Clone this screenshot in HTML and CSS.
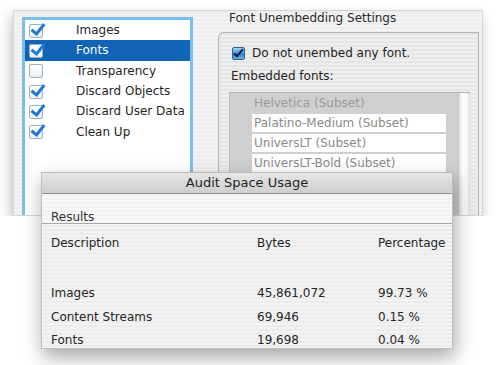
FILE: index.html
```html
<!DOCTYPE html>
<html lang="en">
<head>
  <meta charset="UTF-8" />
  <title>Audit Space Usage</title>
  <link rel="stylesheet" href="styles.css">
</head>
<body>
  <div class="window">
    <div class="options">
      <div class="option"><span class="check on"></span>Images</div>
      <div class="option selected"><span class="check on"></span>Fonts</div>
      <div class="option"><span class="check"></span>Transparency</div>
      <div class="option"><span class="check on"></span>Discard Objects</div>
      <div class="option"><span class="check on"></span>Discard User Data</div>
      <div class="option"><span class="check on"></span>Clean Up</div>
    </div>

    <div class="settings">
      <div class="settings-title">Font Unembedding Settings</div>
      <div class="group">
        <label class="aqua-row"><span class="aqua-check"></span>Do not unembed any font.</label>
        <div class="group-label">Embedded fonts:</div>
        <div class="font-list">
          <div class="font-items">
            <div class="font-item dim">Helvetica (Subset)</div>
            <div class="font-item">Palatino-Medium (Subset)</div>
            <div class="font-item">UniversLT (Subset)</div>
            <div class="font-item">UniversLT-Bold (Subset)</div>
          </div>
          <div class="scroll-track"></div>
        </div>
      </div>
    </div>
  </div>

  <div class="dialog">
    <div class="dialog-title">Audit Space Usage</div>
    <div class="results-band">Results</div>
    <div class="results">
      <div class="row head">
        <span>Description</span><span>Bytes</span><span>Percentage</span>
      </div>
      <div class="row first">
        <span>Images</span><span>45,861,072</span><span>99.73 %</span>
      </div>
      <div class="row">
        <span>Content Streams</span><span>69,946</span><span>0.15 %</span>
      </div>
      <div class="row">
        <span>Fonts</span><span>19,698</span><span>0.04 %</span>
      </div>
    </div>
  </div>
</body>
</html>
```

FILE: styles.css
```css
body {
  margin: 0;
  background: #fff;
  font-family: 'DejaVu Sans', sans-serif;
  font-size: 12px;
  color: #222;
  overflow: hidden;
}

.window {
  display: flex;
  margin: 10px 0 0 13px;
  width: 470px;
  height: 206px;
  padding-right: 3px;
  box-sizing: border-box;
  background: repeating-linear-gradient(#ededed 0 2px, #f4f4f4 2px 4px);
  border: 1px solid #d6d6d6;
  box-shadow: -2px 6px 12px rgba(0, 0, 0, 0.25);
}

/* left checklist */
.options {
  width: 171px;
  margin: 6px 0 0 8px;
  background: #fff;
  border: 3px solid #7cc0ea;
  border-bottom: none;
  box-sizing: border-box;
}

.option {
  display: flex;
  align-items: center;
  height: 20.3px;
  color: #262626;
}

.option.selected {
  background: #1264b6;
  color: #fff;
}

.check {
  position: relative;
  width: 14px;
  height: 14px;
  margin: 1px 33px 0 4px;
  background: linear-gradient(#fff, #e8eef4);
  border: 1px solid #9cb0c8;
  border-radius: 2px;
  box-sizing: border-box;
}

.check.on::after {
  content: "";
  position: absolute;
  left: 4px;
  top: -4px;
  width: 5px;
  height: 11px;
  border: solid #1f78cf;
  border-width: 0 3px 3px 0;
  transform: rotate(38deg);
  filter: drop-shadow(0 0 0.6px #d6ecff);
}

/* right settings panel */
.settings {
  flex: 1;
  display: flex;
  flex-direction: column;
  margin-left: 25px;
}

.settings-title {
  margin-left: 11px;
  line-height: 14px;
  color: #2a2a2a;
}

.group {
  flex: 1;
  display: flex;
  flex-direction: column;
  margin-top: 7px;
  padding: 12px 8px 0 10px;
  border: 1px solid #b4b4b4;
  border-bottom: none;
  border-radius: 6px 0 0 0;
  background: repeating-linear-gradient(#e6e6e6 0 2px, #eeeeee 2px 4px);
  overflow: hidden;
}

.aqua-row {
  display: flex;
  align-items: center;
  line-height: 16px;
  margin-left: 3px;
  color: #1e1e1e;
}

.aqua-check {
  position: relative;
  width: 13px;
  height: 13px;
  margin-right: 7px;
  background: linear-gradient(#9ed0f6, #2f86d6 60%, #6bb6f0);
  border: 1px solid #38608c;
  border-radius: 2px;
  box-sizing: border-box;
}

.aqua-check::after {
  content: "";
  position: absolute;
  left: 3px;
  top: -1px;
  width: 3px;
  height: 8px;
  border: solid #0c1e38;
  border-width: 0 2px 2px 0;
  transform: rotate(40deg);
}

.group-label {
  margin: 7px 0 8px 2px;
  line-height: 16px;
  color: #262626;
}

.font-list {
  flex: 1;
  display: flex;
  background: #d0d0d0;
  border-top: 1px solid #b2b2b2;
  border-left: 1px solid #c0c0c0;
}

.font-items {
  flex: 1;
  padding: 1px 12px 0 22px;
}

.font-item {
  height: 18px;
  line-height: 18px;
  margin-bottom: 2px;
  padding-left: 2px;
  background: #fff;
  color: #8a8a8a;
}

.font-item.dim {
  background: none;
  color: #9a9a9a;
}

.scroll-track {
  width: 11px;
  background: linear-gradient(90deg, #e4e4e4, #ffffff 40%, #f4f4f4 80%, #d8d8d8);
  border-left: 1px solid #c4c4c4;
}

/* overlaid audit dialog */
.dialog {
  position: absolute;
  left: 41px;
  top: 172px;
  width: 412px;
  height: 177px;
  display: flex;
  flex-direction: column;
  background: repeating-linear-gradient(#ececec 0 2px, #f3f3f3 2px 4px);
  border: 1px solid #bdbdbd;
  box-sizing: border-box;
  box-shadow: 2px 8px 18px rgba(0, 0, 0, 0.35);
}

.dialog-title {
  flex-shrink: 0;
  height: 20px;
  line-height: 20px;
  text-align: center;
  font-size: 13px;
  color: #1e1e1e;
  background: linear-gradient(#e6e6e6, #cfcfcf);
  border-bottom: 1px solid #8e8e8e;
}

.results-band {
  flex-shrink: 0;
  display: flex;
  align-items: flex-end;
  height: 30px;
  line-height: 11px;
  padding-left: 9px;
  box-sizing: border-box;
  color: #333;
  background: repeating-linear-gradient(#f2f2f2 0 2px, #f8f8f8 2px 4px);
  border-bottom: 1px solid #a8a8a8;
}

.results {
  flex: 1;
  padding: 9px 0 0 9px;
  overflow: hidden;
  box-shadow: inset 0 1px 0 #f8f8f8;
}

.row {
  display: grid;
  grid-template-columns: 206px 121px 1fr;
  height: 23.5px;
  line-height: 23.5px;
  color: #262626;
}

.row.head {
  height: 20px;
  line-height: 20px;
}

.row.first {
  margin-top: 29px;
}
```
